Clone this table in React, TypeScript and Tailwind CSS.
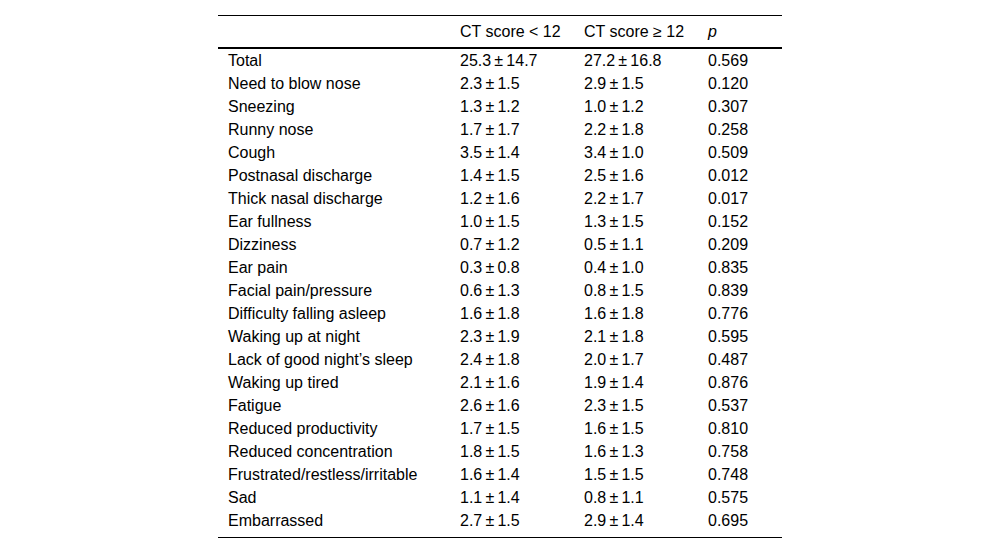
import React from "react";

const rows: [string, string, string, string][] = [
  ["Total", "25.3 ± 14.7", "27.2 ± 16.8", "0.569"],
  ["Need to blow nose", "2.3 ± 1.5", "2.9 ± 1.5", "0.120"],
  ["Sneezing", "1.3 ± 1.2", "1.0 ± 1.2", "0.307"],
  ["Runny nose", "1.7 ± 1.7", "2.2 ± 1.8", "0.258"],
  ["Cough", "3.5 ± 1.4", "3.4 ± 1.0", "0.509"],
  ["Postnasal discharge", "1.4 ± 1.5", "2.5 ± 1.6", "0.012"],
  ["Thick nasal discharge", "1.2 ± 1.6", "2.2 ± 1.7", "0.017"],
  ["Ear fullness", "1.0 ± 1.5", "1.3 ± 1.5", "0.152"],
  ["Dizziness", "0.7 ± 1.2", "0.5 ± 1.1", "0.209"],
  ["Ear pain", "0.3 ± 0.8", "0.4 ± 1.0", "0.835"],
  ["Facial pain/pressure", "0.6 ± 1.3", "0.8 ± 1.5", "0.839"],
  ["Difficulty falling asleep", "1.6 ± 1.8", "1.6 ± 1.8", "0.776"],
  ["Waking up at night", "2.3 ± 1.9", "2.1 ± 1.8", "0.595"],
  ["Lack of good night\u2019s sleep", "2.4 ± 1.8", "2.0 ± 1.7", "0.487"],
  ["Waking up tired", "2.1 ± 1.6", "1.9 ± 1.4", "0.876"],
  ["Fatigue", "2.6 ± 1.6", "2.3 ± 1.5", "0.537"],
  ["Reduced productivity", "1.7 ± 1.5", "1.6 ± 1.5", "0.810"],
  ["Reduced concentration", "1.8 ± 1.5", "1.6 ± 1.3", "0.758"],
  ["Frustrated/restless/irritable", "1.6 ± 1.4", "1.5 ± 1.5", "0.748"],
  ["Sad", "1.1 ± 1.4", "0.8 ± 1.1", "0.575"],
  ["Embarrassed", "2.7 ± 1.5", "2.9 ± 1.4", "0.695"],
];

function PM({ v }: { v: string }) {
  const [a, b] = v.split(" ± ");
  return (
    <span>
      {a}
      {"\u2009±\u2009"}
      {b}
    </span>
  );
}

export default function App() {
  return (
    <div
      className="w-full min-h-[553px] bg-white flex justify-center pt-[15px] text-black text-[16px]"
      style={{ fontFamily: '"Liberation Sans", Arial, sans-serif' }}
    >
      <div className="w-[564px]">
        <div className="grid grid-cols-[232px_124px_124px_84px] border-t border-black border-b-2 h-[34px] items-center">
          <div />
          <div className="pl-[10px]">CT score &lt; 12</div>
          <div className="pl-[10px]">CT score ≥ 12</div>
          <div className="pl-[10px] italic">p</div>
        </div>
        <div className="border-b border-black pb-[5px]">
          {rows.map((r) => (
            <div
              key={r[0]}
              className="grid grid-cols-[232px_124px_124px_84px] h-[23px] items-center leading-[23px]"
            >
              <div className="pl-[10px]">{r[0]}</div>
              <div className="pl-[10px]">
                <PM v={r[1]} />
              </div>
              <div className="pl-[10px]">
                <PM v={r[2]} />
              </div>
              <div className="pl-[10px]">{r[3]}</div>
            </div>
          ))}
        </div>
      </div>
    </div>
  );
}
